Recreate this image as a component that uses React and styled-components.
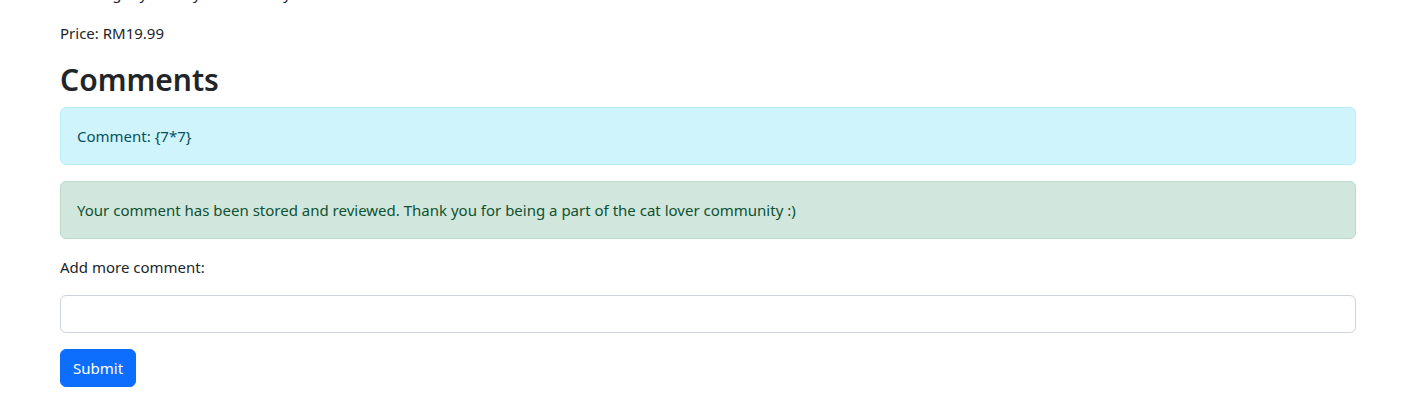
import React from "react";
import styled, { createGlobalStyle } from "styled-components";

const GlobalStyle = createGlobalStyle`
	* {
		box-sizing: border-box;
	}
	body {
		margin: 0;
		background: #fff;
		color: #212529;
		font-family: "Segoe UI", "Noto Sans", "Liberation Sans", sans-serif;
		font-size: 15px;
		line-height: 24px;
	}
`;

const Container = styled.div`
	width: 1296px;
	margin-left: 60px;
	margin-top: -19px;
`;

const Text = styled.p`
	margin: 0 0 16px;
`;

const Heading = styled.h2`
	margin: 0 0 8px;
	font-size: 30px;
	font-weight: 600;
	line-height: 38.4px;
`;

const tones = {
	info: { bg: "#cff4fc", border: "#b6effb", color: "#055160" },
	success: { bg: "#d1e7dd", border: "#badbcc", color: "#0f5132" },
};

const Alert = styled.div`
	padding: 16px;
	margin-bottom: 16px;
	border: 1px solid ${(p) => tones[p.$tone].border};
	border-radius: 6px;
	background-color: ${(p) => tones[p.$tone].bg};
	color: ${(p) => tones[p.$tone].color};
`;

const Form = styled.form`
	display: flex;
	flex-direction: column;
	align-items: flex-start;
`;

const Input = styled.input`
	display: block;
	width: 100%;
	height: 38px;
	padding: 6px 12px;
	margin-bottom: 16px;
	font: inherit;
	color: #212529;
	background: #fff;
	border: 1px solid #ced4da;
	border-radius: 6px;
	outline: none;
`;

const Button = styled.button`
	height: 38px;
	padding: 6px 12px;
	font: inherit;
	color: #fff;
	background-color: #0d6efd;
	border: 1px solid #0d6efd;
	border-radius: 6px;
	cursor: pointer;
`;

export default function App() {
	return (
		<>
			<GlobalStyle />
			<Container>
				<Text>Amazing toy for any curious kitty.</Text>
				<Text>Price: RM19.99</Text>
				<Heading>Comments</Heading>
				<Alert $tone="info">Comment: {"{7*7}"}</Alert>
				<Alert $tone="success">
					Your comment has been stored and reviewed. Thank you for being a part
					of the cat lover community :)
				</Alert>
				<Form onSubmit={(e) => e.preventDefault()}>
					<Text>Add more comment:</Text>
					<Input type="text" />
					<Button type="submit">Submit</Button>
				</Form>
			</Container>
		</>
	);
}
